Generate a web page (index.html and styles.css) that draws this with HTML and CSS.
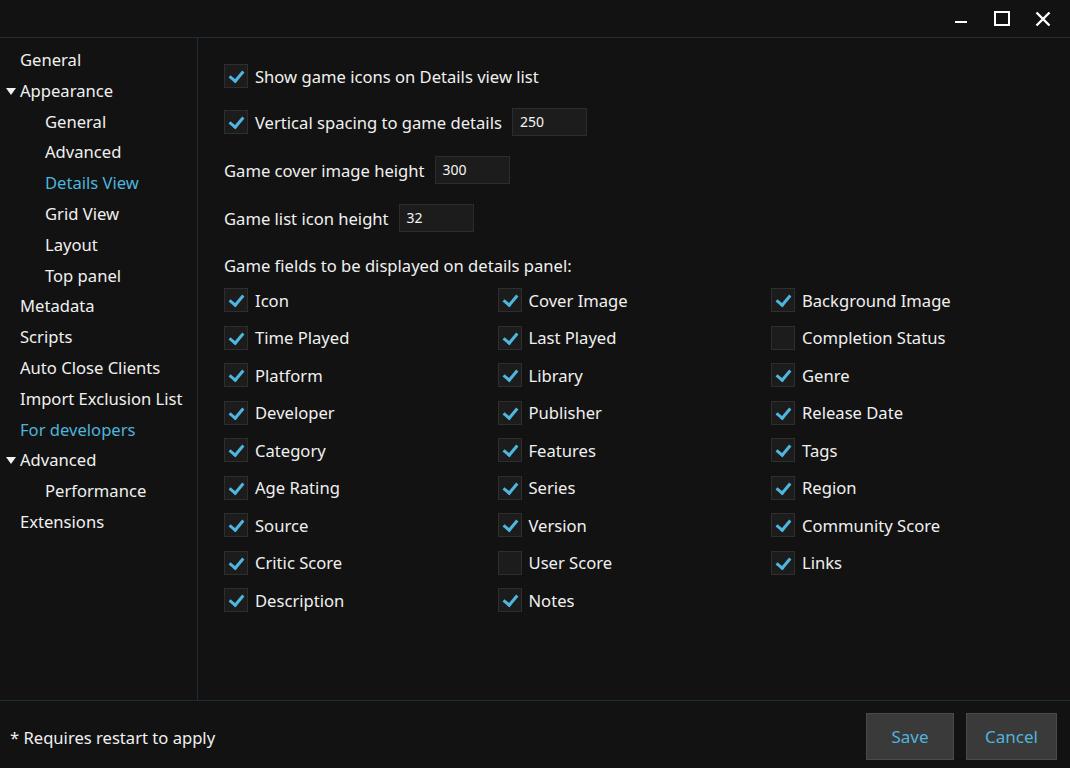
FILE: index.html
```html
<!DOCTYPE html>
<html>
<head>
<meta charset="utf-8">
<link rel="stylesheet" href="styles.css">
</head>
<body>
<div class="window">
  <div class="titlebar">
    <div class="winbtn">
      <svg width="20" height="20" viewBox="0 0 20 20"><rect x="4" y="12" width="12" height="2" fill="#fff"/></svg>
    </div>
    <div class="winbtn">
      <svg width="20" height="20" viewBox="0 0 20 20"><rect x="3" y="3" width="14" height="13" fill="none" stroke="#fff" stroke-width="2"/></svg>
    </div>
    <div class="winbtn">
      <svg width="20" height="20" viewBox="0 0 20 20"><path d="M3.5 3.5 L16.5 16.5 M16.5 3.5 L3.5 16.5" stroke="#fff" stroke-width="2.4"/></svg>
    </div>
  </div>
  <div class="main">
    <nav class="sidebar">
      <div class="nav-item l1">General</div>
      <div class="nav-item l1 group"><span class="tri"></span>Appearance</div>
      <div class="nav-item l2">General</div>
      <div class="nav-item l2">Advanced</div>
      <div class="nav-item l2 active">Details View</div>
      <div class="nav-item l2">Grid View</div>
      <div class="nav-item l2">Layout</div>
      <div class="nav-item l2">Top panel</div>
      <div class="nav-item l1">Metadata</div>
      <div class="nav-item l1">Scripts</div>
      <div class="nav-item l1">Auto Close Clients</div>
      <div class="nav-item l1">Import Exclusion List</div>
      <div class="nav-item l1 active">For developers</div>
      <div class="nav-item l1 group"><span class="tri"></span>Advanced</div>
      <div class="nav-item l2">Performance</div>
      <div class="nav-item l1">Extensions</div>
    </nav>
    <section class="content">
      <div class="row r1"><span class="cb on"></span><span>Show game icons on Details view list</span></div>
      <div class="row r2"><span class="cb on"></span><span>Vertical spacing to game details</span><span class="input">250</span></div>
      <div class="row r3"><span>Game cover image height</span><span class="input">300</span></div>
      <div class="row r4"><span>Game list icon height</span><span class="input">32</span></div>
      <div class="row r5"><span>Game fields to be displayed on details panel:</span></div>
      <div class="grid">
        <div class="gi"><span class="cb on"></span>Icon</div>
        <div class="gi"><span class="cb on"></span>Cover Image</div>
        <div class="gi"><span class="cb on"></span>Background Image</div>
        <div class="gi"><span class="cb on"></span>Time Played</div>
        <div class="gi"><span class="cb on"></span>Last Played</div>
        <div class="gi"><span class="cb"></span>Completion Status</div>
        <div class="gi"><span class="cb on"></span>Platform</div>
        <div class="gi"><span class="cb on"></span>Library</div>
        <div class="gi"><span class="cb on"></span>Genre</div>
        <div class="gi"><span class="cb on"></span>Developer</div>
        <div class="gi"><span class="cb on"></span>Publisher</div>
        <div class="gi"><span class="cb on"></span>Release Date</div>
        <div class="gi"><span class="cb on"></span>Category</div>
        <div class="gi"><span class="cb on"></span>Features</div>
        <div class="gi"><span class="cb on"></span>Tags</div>
        <div class="gi"><span class="cb on"></span>Age Rating</div>
        <div class="gi"><span class="cb on"></span>Series</div>
        <div class="gi"><span class="cb on"></span>Region</div>
        <div class="gi"><span class="cb on"></span>Source</div>
        <div class="gi"><span class="cb on"></span>Version</div>
        <div class="gi"><span class="cb on"></span>Community Score</div>
        <div class="gi"><span class="cb on"></span>Critic Score</div>
        <div class="gi"><span class="cb"></span>User Score</div>
        <div class="gi"><span class="cb on"></span>Links</div>
        <div class="gi"><span class="cb on"></span>Description</div>
        <div class="gi"><span class="cb on"></span>Notes</div>
      </div>
    </section>
  </div>
  <footer class="footer">
    <div class="note">* Requires restart to apply</div>
    <div class="buttons">
      <button class="btn save">Save</button>
      <button class="btn cancel">Cancel</button>
    </div>
  </footer>
</div>
</body>
</html>
```
FILE: styles.css
```css
* { box-sizing: border-box; }
html, body {
  margin: 0;
  padding: 0;
  background: #121212;
}
body {
  font-family: "Noto Sans", "Open Sans", sans-serif;
  font-size: 16.6px;
  color: #f0f0f0;
}
.window {
  width: 1070px;
  height: 768px;
  display: flex;
  flex-direction: column;
  background: #121212;
  overflow: hidden;
}
.titlebar {
  height: 38px;
  flex: none;
  border-bottom: 1px solid #1f2e36;
  display: flex;
  justify-content: flex-end;
  align-items: center;
  padding-right: 17px;
  gap: 21px;
}
.winbtn {
  width: 20px;
  height: 20px;
  display: flex;
}
.winbtn svg { display: block; }
.main {
  flex: 1;
  display: flex;
  min-height: 0;
}
.sidebar {
  width: 198px;
  flex: none;
  border-right: 1px solid #1f2e36;
  padding-top: 7px;
  display: flex;
  flex-direction: column;
}
.nav-item {
  height: 30.8px;
  line-height: 30.8px;
  white-space: nowrap;
  position: relative;
  color: #f0f0f0;
}
.nav-item.l1 { padding-left: 20px; }
.nav-item.l2 { padding-left: 45px; }
.nav-item.active { color: #4fb4dc; }
.tri {
  position: absolute;
  left: 6px;
  top: 12px;
  width: 0;
  height: 0;
  border-left: 5.5px solid transparent;
  border-right: 5.5px solid transparent;
  border-top: 7px solid #f0f0f0;
}
.content {
  flex: 1;
  padding: 26px 0 0 26px;
}
.row {
  display: flex;
  align-items: center;
  white-space: nowrap;
}
.r1 { height: 24px; margin-bottom: 20px; }
.r2 { height: 28px; margin-bottom: 20px; }
.r3 { height: 28px; margin-bottom: 20px; }
.r4 { height: 28px; margin-bottom: 20px; }
.r5 { height: 26px; margin-bottom: 10px; }
.cb {
  width: 24px;
  height: 24px;
  flex: none;
  background: #1c1c1c;
  border: 1px solid #2e2e2e;
  margin-right: 7px;
  position: relative;
}
.cb.on::after {
  content: "";
  position: absolute;
  left: 7px;
  top: 3px;
  width: 6px;
  height: 11px;
  border-right: 3px solid #4fb6e0;
  border-bottom: 3px solid #4fb6e0;
  transform: rotate(40deg);
}
.input {
  margin-left: 10px;
  width: 75px;
  height: 28px;
  background: #1c1c1c;
  border: 1px solid #2c2c2c;
  font-size: 14px;
  line-height: 26px;
  padding-left: 7px;
  color: #f5f5f5;
}
.grid {
  display: grid;
  grid-template-columns: 273.5px 273.5px 273.5px;
  grid-auto-rows: 37.5px;
}
.gi {
  display: flex;
  align-items: center;
  height: 24px;
  white-space: nowrap;
}
.footer {
  height: 68px;
  flex: none;
  border-top: 1px solid #1f2e36;
  display: flex;
  align-items: center;
  justify-content: space-between;
  padding: 0 13px 0 10px;
}
.note { margin-top: 6px; }
.buttons {
  display: flex;
  gap: 12px;
  margin-top: 4px;
}
.btn {
  height: 47px;
  background: #3a3a3a;
  border: 1px solid #4a4a4a;
  color: #4fb4dc;
  font-family: inherit;
  font-size: 17px;
  padding: 0;
}
.save { width: 88px; }
.cancel { width: 91px; }
```
